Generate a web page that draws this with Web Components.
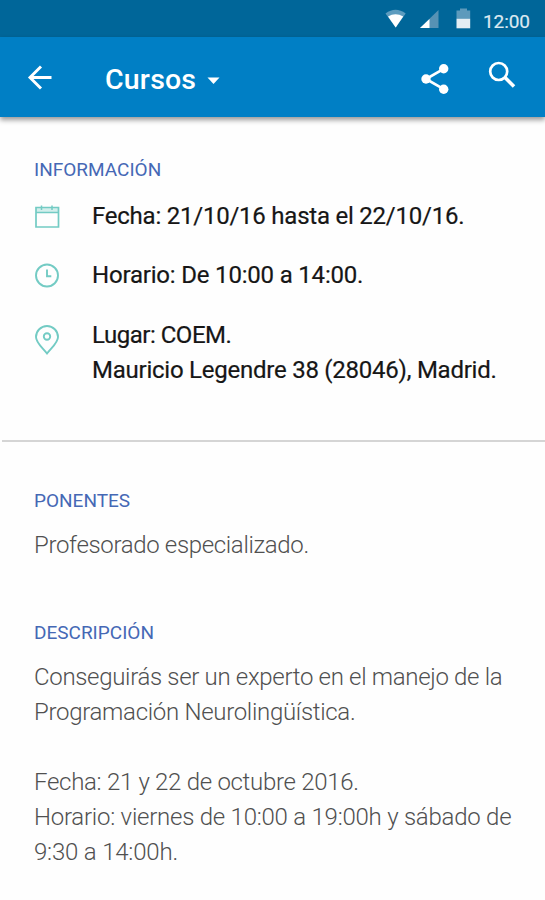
<!DOCTYPE html>
<html lang="es">
<head>
<meta charset="utf-8">
<title>Cursos</title>
<style>
html,body{margin:0;background:#fefefe}
body{width:545px;height:900px;overflow:hidden;font-family:Roboto,"Liberation Sans",sans-serif}
</style>
</head>
<body>
<course-screen></course-screen>
<script>
const define = (name, html) => customElements.define(name, class extends HTMLElement {
  constructor() {
    super();
    this.attachShadow({mode: 'open'}).innerHTML = html;
  }
});

// A line of text with its own tracking, taken from the "track" attribute.
customElements.define('text-line', class extends HTMLElement {
  connectedCallback() {
    if (this.shadowRoot) return;
    this.attachShadow({mode: 'open'}).innerHTML =
      `<style>:host{display:block;white-space:nowrap;letter-spacing:${this.getAttribute('track') || 0}px}</style><slot></slot>`;
  }
});

define('status-bar', `
<style>
:host{display:flex;align-items:flex-start;justify-content:flex-end;box-sizing:border-box;height:37px;background:#006699;padding-right:15px;color:#dce9f1;font-size:19px}
svg{display:block;margin:8px 8px 0 0}
text-line{line-height:24px;margin-top:10px;width:47px;-webkit-text-stroke:.2px #dce9f1}
</style>
<svg width="90" height="22" viewBox="0 0 90 22">
  <path d="M.5 5.500Q10.500 -2 20.700 5.500L10.700 19.500Z" fill="#5d9cbf"/>
  <path d="M3 8.500Q10.500 4 18.200 8.500L10.700 19.500Z" fill="#fff"/>
  <path d="M53.500 2V20H35Z" fill="#5792b4"/>
  <path d="M44.500 11V20H35Z" fill="#fff"/>
  <path d="M71.500 11V2.500H75V.5H82V2.500H85.200V11Z" fill="#5d9abc"/>
  <path d="M71.500 10.800H85.200V20.300H71.500Z" fill="#e4eef4"/>
</svg>
<text-line track="-.1">12:00</text-line>`);

define('app-bar', `
<style>
:host{display:grid;grid-template-columns:105px 1fr 67px 75px;height:80px;background:#007fc5;color:#fff;box-shadow:0 3px 5px #0006}
svg{display:block}
.title{display:flex;gap:11px;font-size:28.500px;font-weight:500;line-height:34px;padding-top:26px}
</style>
<svg style="margin:28px 0 0 27px" width="26" height="26" viewBox="0 0 26 26" fill="none" stroke="#fff" stroke-width="2.900"><path d="M24.500 12.500H3M14 1.500L3 12.500L14 23.500"/></svg>
<div class="title"><text-line track=".2">Cursos</text-line><svg style="margin-top:14px" width="13" height="8" viewBox="0 0 13 8"><path d="M.5.500h12L6.500 7Z" fill="#fff"/></svg></div>
<svg style="margin:26px 0 0 17px" width="30" height="32" viewBox="0 0 30 32" fill="#fff"><path d="M23.700 5.800L6 16L23.700 26.200" fill="none" stroke="#fff" stroke-width="2.700"/><circle cx="23.700" cy="5.800" r="4.700"/><circle cx="6" cy="16" r="4.700"/><circle cx="23.700" cy="26.200" r="4.700"/></svg>
<svg style="margin:24px 0 0 18px" width="29" height="29" viewBox="0 0 29 29" fill="none" stroke="#fff"><circle cx="10.700" cy="10.500" r="8.500" stroke-width="2.700"/><path d="M17 16.500L26 25.500" stroke-width="3.500"/></svg>`);

define('section-title', `<style>:host{display:block;color:#4568b5;font-size:19px;line-height:24px}</style><slot></slot>`);

define('info-row', `
<style>:host{display:grid;grid-template-columns:58px 1fr;color:#161616;font-size:24px;line-height:34.800px;-webkit-text-stroke:.2px #161616}</style>
<slot name="icon"></slot><div><slot></slot></div>`);

define('body-copy', `<style>:host{display:block;color:#505050;font-size:24px;font-weight:300;line-height:35px}</style><slot></slot>`);

define('course-screen', `
<style>
:host{display:flex;flex-direction:column;height:900px}
section{padding-left:34px}
.info{padding-top:41px;height:323px;box-sizing:border-box}
.rows{display:grid;gap:25px;padding-top:16.500px}
.details{padding-top:47px;border-top:2px solid #d5d5d5;margin-left:2px;padding-left:32px}
.details body-copy{margin-top:15px}
.gap{margin-top:58px}
svg{display:block;fill:none;stroke:#73cbc4;stroke-width:1.900}
</style>
<status-bar></status-bar>
<app-bar></app-bar>
<section class="info">
  <section-title><text-line>INFORMACIÓN</text-line></section-title>
  <div class="rows">
    <info-row><svg slot="icon" style="margin-top:6px" width="27" height="26" viewBox="0 0 27 26"><path d="M2 2.500H24.500V7.500H2Z" fill="#d3efec" stroke="none"/><path d="M2 2.500H24.500V22H2ZM2 7.500H24.500" stroke-width="1.700"/><path d="M7.500 .5V5M18 .5V5" stroke-width="1.500"/></svg><text-line track="-.23">Fecha: 21/10/16 hasta el 22/10/16.</text-line></info-row>
    <info-row><svg slot="icon" style="margin-top:4px" width="27" height="27" viewBox="0 0 27 27"><circle cx="13" cy="13.500" r="11"/><path d="M13 7.500V14.300H17.300"/></svg><text-line track="-.19">Horario: De 10:00 a 14:00.</text-line></info-row>
    <info-row><svg slot="icon" style="margin-top:7px" width="27" height="31" viewBox="0 0 27 31"><path d="M13 28.500C9 23 2 18 2 12A11 11 0 0 1 24 12C24 18 17 23 13 28.500Z"/><circle cx="13" cy="11.500" r="3.200"/></svg><text-line track="-.48">Lugar: COEM.</text-line><text-line track="-.24">Mauricio Legendre 38 (28046), Madrid.</text-line></info-row>
  </div>
</section>
<section class="details">
  <section-title><text-line>PONENTES</text-line></section-title>
  <body-copy><text-line track="-.34">Profesorado especializado.</text-line></body-copy>
  <section-title class="gap"><text-line>DESCRIPCIÓN</text-line></section-title>
  <body-copy><text-line track="-.32">Conseguirás ser un experto en el manejo de la</text-line><text-line track="-.3">Programación Neurolingüística.</text-line><text-line>&nbsp;</text-line><text-line track="-.3">Fecha: 21 y 22 de octubre 2016.</text-line><text-line track="-.24">Horario: viernes de 10:00 a 19:00h y sábado de</text-line><text-line track="-.2">9:30 a 14:00h.</text-line></body-copy>
</section>`);
</script>
</body>
</html>
